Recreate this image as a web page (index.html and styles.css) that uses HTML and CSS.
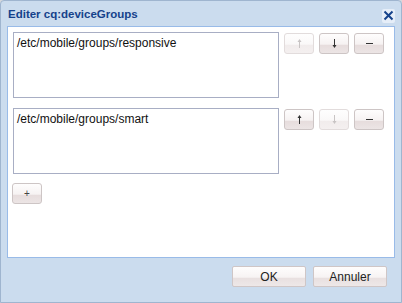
FILE: index.html
```html
<!DOCTYPE html>
<html lang="fr">
<head>
    <meta charset="utf-8">
    <link rel="stylesheet" href="styles.css">
    <title>Editer cq:deviceGroups</title>
</head>
<body>
    <div class="window">
        <div class="header">
            <span class="title">Editer cq:deviceGroups</span>
            <button class="close">
                <svg width="11" height="11" viewBox="0 0 11 11"><path d="M1.5 1.5 L9.5 9.5 M9.5 1.5 L1.5 9.5" stroke="#15428b" stroke-width="2" fill="none"/></svg>
            </button>
        </div>
        <div class="panel">
            <div class="row">
                <textarea class="value" readonly>/etc/mobile/groups/responsive</textarea>
                <div class="tools">
                    <button class="tool" disabled>
                        <svg width="5" height="9" viewBox="0 0 5 9"><path d="M2.5 2 V9" stroke="currentColor" stroke-width="1"/><path d="M2.5 0 L4.5 3 H0.5 Z" fill="currentColor"/></svg>
                    </button>
                    <button class="tool">
                        <svg width="5" height="9" viewBox="0 0 5 9"><path d="M2.5 0 V7" stroke="currentColor" stroke-width="1"/><path d="M2.5 9 L4.5 6 H0.5 Z" fill="currentColor"/></svg>
                    </button>
                    <button class="tool">
                        <svg width="7" height="2" viewBox="0 0 7 2"><rect width="7" height="1" fill="currentColor"/></svg>
                    </button>
                </div>
            </div>
            <div class="row">
                <textarea class="value" readonly>/etc/mobile/groups/smart</textarea>
                <div class="tools">
                    <button class="tool">
                        <svg width="5" height="9" viewBox="0 0 5 9"><path d="M2.5 2 V9" stroke="currentColor" stroke-width="1"/><path d="M2.5 0 L4.5 3 H0.5 Z" fill="currentColor"/></svg>
                    </button>
                    <button class="tool" disabled>
                        <svg width="5" height="9" viewBox="0 0 5 9"><path d="M2.5 0 V7" stroke="currentColor" stroke-width="1"/><path d="M2.5 9 L4.5 6 H0.5 Z" fill="currentColor"/></svg>
                    </button>
                    <button class="tool">
                        <svg width="7" height="2" viewBox="0 0 7 2"><rect width="7" height="1" fill="currentColor"/></svg>
                    </button>
                </div>
            </div>
            <button class="tool add">+</button>
        </div>
        <div class="footer">
            <button class="action">OK</button>
            <button class="action">Annuler</button>
        </div>
    </div>
</body>
</html>
```

FILE: styles.css
```css
body {
    margin: 0;
    font-family: "Liberation Sans", Arial, sans-serif;
    font-size: 12px;
    background-color: #d6d9dd;
}

.window {
    box-sizing: border-box;
    width: 402px;
    height: 303px;
    border: 1px solid #9fb5cf;
    border-radius: 4px 4px 0 0;
    background-color: #cbdcee;
    display: flex;
    flex-direction: column;
}

.header {
    height: 25px;
    padding: 0 6px 0 7px;
    display: flex;
    align-items: center;
    justify-content: space-between;
}

.title {
    font-weight: bold;
    font-size: 11.5px;
    color: #15428b;
    margin-top: 1px;
}

.close {
    width: 13px;
    height: 14px;
    padding: 0;
    margin-top: 4px;
    border: 0;
    border-radius: 2px;
    background-color: #e6eef8;
    display: flex;
    align-items: center;
    justify-content: center;
}

.panel {
    box-sizing: border-box;
    height: 232px;
    margin: 0 6px;
    padding: 5px;
    background-color: #fff;
    border: 1px solid #99bbe8;
}

.row {
    display: flex;
    gap: 5px;
    margin-bottom: 10px;
}

.value {
    box-sizing: border-box;
    width: 266px;
    height: 66px;
    margin: 0;
    padding: 3px 3px;
    border: 1px solid #a8aec4;
    font-family: "Liberation Sans", Arial, sans-serif;
    font-size: 12px;
    color: #111;
    resize: none;
    overflow: hidden;
}

.tools {
    display: flex;
    gap: 5px;
    padding-top: 1px;
}

.tool {
    box-sizing: border-box;
    width: 30px;
    height: 21px;
    padding: 0;
    border: 1px solid #cdc5c5;
    border-radius: 3px;
    background: linear-gradient(#fefdfd 0%, #f6f2f2 55%, #e6dcdc 56%, #ece5e5 100%);
    color: #333;
    display: flex;
    align-items: center;
    justify-content: center;
}

.tool:disabled {
    border-color: #e2dcdc;
    background: linear-gradient(#fefefe 0%, #faf8f8 55%, #f1ecec 56%, #f4f0f0 100%);
    color: #c8c4c4;
}

.add {
    margin-top: -1px;
    margin-left: -1px;
    font-family: "Liberation Sans", Arial, sans-serif;
    font-size: 10px;
    color: #444;
}

.footer {
    display: flex;
    justify-content: flex-end;
    gap: 7px;
    padding: 8px 14px 0 0;
}

.action {
    box-sizing: border-box;
    width: 74px;
    height: 21px;
    padding: 0;
    border: 1px solid #cfc6c6;
    border-radius: 2px;
    background: linear-gradient(#fefdfd 0%, #f7f3f3 55%, #e8dfdf 56%, #eee8e8 100%);
    font-family: "Liberation Sans", Arial, sans-serif;
    font-size: 12px;
    color: #222;
}
```
